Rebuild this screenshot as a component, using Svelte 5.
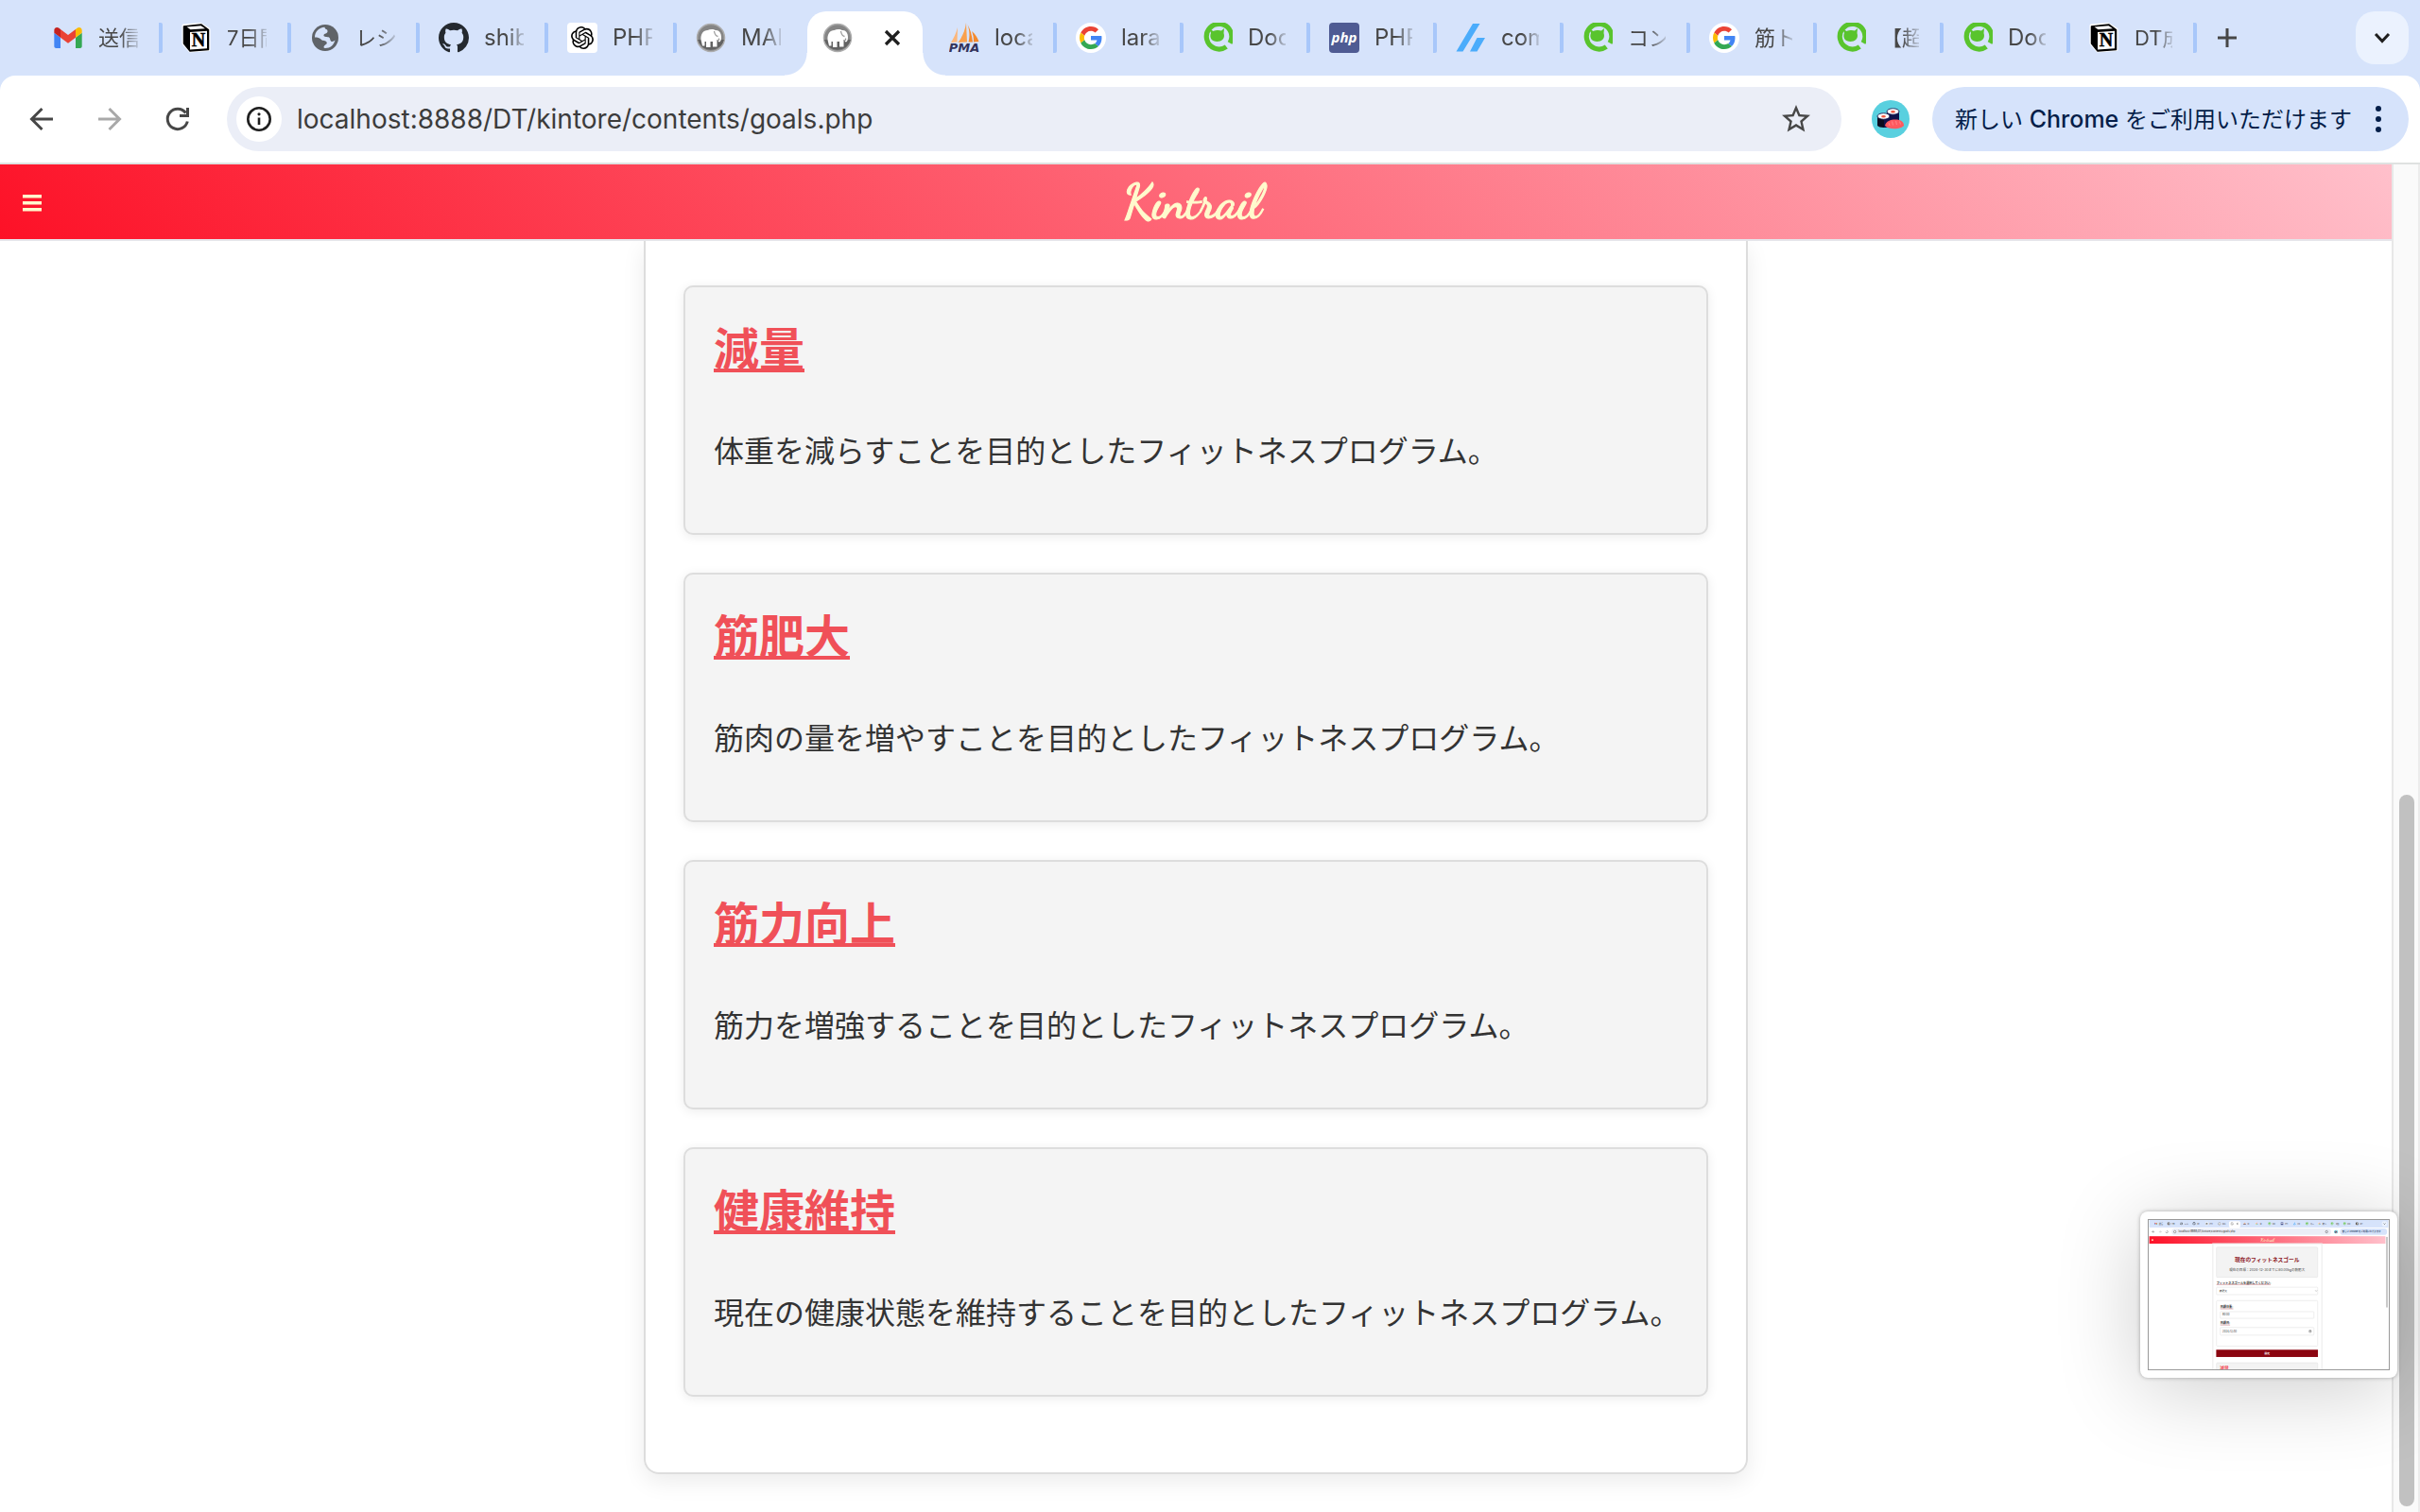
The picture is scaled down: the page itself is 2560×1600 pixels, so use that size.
<script>
  const leftTabs = [
    { icon: 'gmail', title: '送信済み', ja: true },
    { icon: 'notion', title: '7日間の', ja: true },
    { icon: 'globe', title: 'レシピ', ja: true },
    { icon: 'github', title: 'shibata' },
    { icon: 'openai', title: 'PHP' },
    { icon: 'mamp', title: 'MAMP' }
  ];
  const rightTabs = [
    { icon: 'pma', title: 'localhost' },
    { icon: 'google', title: 'laravel' },
    { icon: 'qiita', title: 'Docker' },
    { icon: 'php', title: 'PHP' },
    { icon: 'slant', title: 'common' },
    { icon: 'qiita', title: 'コンテナ', ja: true },
    { icon: 'google', title: '筋トレ', ja: true },
    { icon: 'qiita', title: '【超入門', ja: true },
    { icon: 'qiita', title: 'Docker' },
    { icon: 'notion', title: 'DT成果', ja: true }
  ];
  const goals = [
    { name: '減量', text: '体重を減らすことを目的としたフィットネスプログラム。' },
    { name: '筋肥大', text: '筋肉の量を増やすことを目的としたフィットネスプログラム。' },
    { name: '筋力向上', text: '筋力を増強することを目的としたフィットネスプログラム。' },
    { name: '健康維持', text: '現在の健康状態を維持することを目的としたフィットネスプログラム。' }
  ];
  let url = $state('localhost:8888/DT/kintore/contents/goals.php');
</script>

{#snippet favicon(kind, x = 0, y = 0)}
  {#if kind === 'gmail'}
    <svg {x} {y} width="32" height="32" viewBox="48 27 96 96" aria-hidden="true">
      <path fill="#4285f4" d="M58 108h14V74L52 59v43c0 3.32 2.69 6 6 6" />
      <path fill="#34a853" d="M120 108h14c3.32 0 6-2.69 6-6V59l-20 15" />
      <path fill="#fbbc04" d="M120 48v26l20-15v-8c0-7.42-8.47-11.65-14.4-7.2" />
      <path fill="#ea4335" d="M72 74V48l24 18 24-18v26L96 92" />
      <path fill="#c5221f" d="M52 51v8l20 15V48l-5.6-4.2c-5.94-4.45-14.4-.22-14.4 7.2" />
    </svg>
  {:else if kind === 'notion'}
    <svg {x} {y} width="32" height="32" viewBox="0 0 32 32" aria-hidden="true">
      <path d="M2 3 L20 1.500 L29 7 V28.500 L9 30 L2 22 Z" fill="#fff" stroke="#fff" stroke-width="3" stroke-linejoin="round" />
      <path d="M2.500 4 L21 2 L28.500 7.500 V28.500 L9 30 L2.500 22 Z" fill="#000" stroke="#000" stroke-width="1.500" stroke-linejoin="round" />
      <path d="M5.500 4.500 L20.500 3.200 L25 6.300 L9.500 7.300 Z" fill="#fff" />
      <path d="M9 10 L27 8.800 V27.200 L9 28.500 Z" fill="#fff" />
      <text x="18" y="25" text-anchor="middle" font-family="Liberation Serif, serif" font-size="20" font-weight="700" fill="#000" stroke="#000" stroke-width="0.500">N</text>
    </svg>
  {:else if kind === 'globe'}
    <svg {x} {y} width="32" height="32" viewBox="0 0 32 32" aria-hidden="true">
      <circle cx="16" cy="16" r="14" fill="#5f6368" />
      <path d="M5 15.500 C5 9.500 9.500 5 15.500 4.800 C15.500 7.500 19 6.500 18.500 9.500 C18 12 15 11 14.500 13 C14 15 17 15 19.500 15.300 C22 16 20.500 19.500 23 20 C24.500 20.200 25.500 19 26.500 18.500 C25 23.500 21.500 27 16 27 C14.500 26.800 14 26 15 24.500 C16.500 23 18.500 22.500 17.500 20.500 C16.500 18.500 13.500 19.500 12 18 C10 16 8 15.500 5 15.500 Z" fill="#d6e3fb" />
    </svg>
  {:else if kind === 'github'}
    <svg {x} {y} width="32" height="32" viewBox="0 0 16 16" aria-hidden="true">
      <path fill="#24292f" d="M8 0C3.58 0 0 3.58 0 8c0 3.54 2.29 6.53 5.47 7.59.4.07.55-.17.55-.38 0-.19-.01-.82-.01-1.49-2.01.37-2.53-.49-2.69-.94-.09-.23-.48-.94-.82-1.13-.28-.15-.68-.52-.01-.53.63-.01 1.08.58 1.23.82.72 1.21 1.87.87 2.33.66.07-.52.28-.87.51-1.07-1.78-.2-3.64-.89-3.64-3.95 0-.87.31-1.59.82-2.15-.08-.2-.36-1.02.08-2.12 0 0 .67-.21 2.2.82.64-.18 1.32-.27 2-.27s1.36.09 2 .27c1.53-1.04 2.2-.82 2.2-.82.44 1.1.16 1.92.08 2.12.51.56.82 1.27.82 2.15 0 3.07-1.87 3.75-3.65 3.95.29.25.54.73.54 1.48 0 1.07-.01 1.93-.01 2.2 0 .21.15.46.55.38A8.01 8.01 0 0016 8c0-4.42-3.58-8-8-8z" />
    </svg>
  {:else if kind === 'openai'}
    <svg {x} {y} width="32" height="32" viewBox="0 0 32 32" aria-hidden="true">
      <rect width="32" height="32" rx="4" fill="#fff" />
      <svg x="4" y="4" width="24" height="24" viewBox="0 0 24 24">
        <path d="M22.2819 9.8211a5.9847 5.9847 0 0 0-.5157-4.9108 6.0462 6.0462 0 0 0-6.5098-2.9A6.0651 6.0651 0 0 0 4.9807 4.1818a5.9847 5.9847 0 0 0-3.9977 2.9 6.0462 6.0462 0 0 0 .7427 7.0966 5.98 5.98 0 0 0 .511 4.9107 6.051 6.051 0 0 0 6.5146 2.9001A5.9847 5.9847 0 0 0 13.2599 24a6.0557 6.0557 0 0 0 5.7718-4.2058 5.9894 5.9894 0 0 0 3.9977-2.9001 6.0557 6.0557 0 0 0-.7475-7.0729zm-9.022 12.6081a4.4755 4.4755 0 0 1-2.8764-1.0408l.1419-.0804 4.7783-2.7582a.7948.7948 0 0 0 .3927-.6813v-6.7369l2.02 1.1686a.071.071 0 0 1 .038.052v5.5826a4.504 4.504 0 0 1-4.4945 4.4944zm-9.6607-4.1254a4.4708 4.4708 0 0 1-.5346-3.0137l.142.0852 4.783 2.7582a.7712.7712 0 0 0 .7806 0l5.8428-3.3685v2.3324a.0804.0804 0 0 1-.0332.0615L9.74 19.9502a4.4992 4.4992 0 0 1-6.1408-1.6464zM2.3408 7.8956a4.485 4.485 0 0 1 2.3655-1.9728V11.6a.7664.7664 0 0 0 .3879.6765l5.8144 3.3543-2.0201 1.1685a.0757.0757 0 0 1-.071 0l-4.8303-2.7865A4.504 4.504 0 0 1 2.3408 7.872zm16.5963 3.8558L13.1038 8.364 15.1192 7.2a.0757.0757 0 0 1 .071 0l4.8303 2.7913a4.4944 4.4944 0 0 1-.6765 8.1042v-5.6772a.79.79 0 0 0-.407-.667zm2.0107-3.0231l-.142-.0852-4.7735-2.7818a.7759.7759 0 0 0-.7854 0L9.409 9.2297V6.8974a.0662.0662 0 0 1 .0284-.0615l4.8303-2.7866a4.4992 4.4992 0 0 1 6.6802 4.66zM8.3065 12.863l-2.02-1.1638a.0804.0804 0 0 1-.038-.0567V6.0742a4.4992 4.4992 0 0 1 7.3757-3.4537l-.142.0805L8.704 5.459a.7948.7948 0 0 0-.3927.6813zm1.0976-2.3654l2.602-1.4998 2.6069 1.4998v2.9994l-2.5974 1.4997-2.6067-1.4997Z" />
      </svg>
    </svg>
  {:else if kind === 'mamp'}
    <svg {x} {y} width="32" height="32" viewBox="0 0 32 32" aria-hidden="true">
      <circle cx="16" cy="16" r="14.500" fill="#858585" stroke="#adadad" stroke-width="1.500" />
      <path d="M2 18 A14.500 14.500 0 0 0 30 18 Z" fill="#626262" />
      <path d="M5.500 18 C5 12 8 8 12.500 8 C15 6.500 19 6.500 21 8 C24.500 7.500 27 11 27 15 C27 18 26.500 20 25 20.500 C24 20.500 23.500 19 23.500 18 L22.500 18 V25.500 H18 V20 H15.500 V26 H11 V20 L9.500 20 V24.500 H7 Z" fill="#fff" />
      <path d="M19.500 9 C20 12 21 14 23.500 14.500 M24.500 16.500 V19" stroke="#9a9a9a" stroke-width="1.300" fill="none" />
    </svg>
  {:else if kind === 'pma'}
    <svg {x} {y} width="32" height="32" viewBox="0 0 32 32" aria-hidden="true">
      <path d="M9 5 C7.500 11 5 16 2 21 L8.500 20.500 Z" fill="#fbb67a" />
      <path d="M18 0 C17 8 14 15 9.500 21 L19 20.500 Z" fill="#f9a04d" />
      <path d="M19.500 2 C22 9 22 15 20.500 20.500 L25 20.500 C24 13 22.500 7 19.500 2 Z" fill="#f58a2c" />
      <path d="M24 9 C28 12 30 16 31.500 20 L26 20.500 C26 16 25.500 13 24 9 Z" fill="#f58a2c" />
      <text x="16" y="31" text-anchor="middle" font-family="DejaVu Sans, sans-serif" font-size="13" font-weight="700" font-style="italic" fill="#33335c">PMA</text>
    </svg>
  {:else if kind === 'google'}
    <svg {x} {y} width="32" height="32" viewBox="-8 -8 64 64" aria-hidden="true">
      <circle cx="24" cy="24" r="32" fill="#fff" />
      <path fill="#ea4335" d="M24 9.5c3.54 0 6.71 1.22 9.21 3.6l6.85-6.85C35.9 2.38 30.47 0 24 0 14.62 0 6.51 5.38 2.56 13.22l7.98 6.19C12.43 13.72 17.74 9.5 24 9.5z" />
      <path fill="#4285f4" d="M46.98 24.55c0-1.57-.15-3.09-.38-4.55H24v9.02h12.94c-.58 2.96-2.26 5.48-4.78 7.18l7.73 6c4.51-4.18 7.09-10.36 7.09-17.65z" />
      <path fill="#fbbc05" d="M10.53 28.59c-.48-1.45-.76-2.99-.76-4.59s.27-3.14.76-4.59l-7.98-6.19C.92 16.46 0 20.12 0 24c0 3.88.92 7.54 2.56 10.78l7.97-6.19z" />
      <path fill="#34a853" d="M24 48c6.48 0 11.93-2.13 15.89-5.81l-7.73-6c-2.15 1.45-4.92 2.3-8.16 2.3-6.26 0-11.57-4.22-13.47-9.91l-7.98 6.19C6.51 42.62 14.62 48 24 48z" />
    </svg>
  {:else if kind === 'qiita'}
    <svg {x} {y} width="32" height="32" viewBox="0 0 32 32" aria-hidden="true">
      <path d="M29 21.500 A13.300 13.300 0 1 0 25.300 25.500" fill="none" stroke="#59c42d" stroke-width="5.200" />
      <path d="M7.500 6.500 L11.500 9 C14 7.800 18 7.600 20 8.600 L23 6 L22.500 11 C24.500 17 20 20 15.500 20 C10 20 7 16 9 11 Z" fill="#59c42d" />
    </svg>
  {:else if kind === 'php'}
    <svg {x} {y} width="32" height="32" viewBox="0 0 32 32" aria-hidden="true">
      <rect width="32" height="32" rx="4" fill="#4f5b93" />
      <text x="16" y="21" text-anchor="middle" font-family="Open Sans, sans-serif" font-size="15" font-weight="700" font-style="italic" fill="#fff">php</text>
    </svg>
  {:else}
    <svg {x} {y} width="32" height="32" viewBox="0 0 32 32" aria-hidden="true">
      <path d="M18 1 H25.500 L7.500 30.500 H0.500 Z M22.500 16 H31 L22.500 30.500 H15 Z" fill="#4bacfb" />
    </svg>
  {/if}
{/snippet}

{#snippet avatar(x = 0, y = 0)}
  <svg {x} {y} width="40" height="40" viewBox="0 0 40 40" aria-hidden="true">
    <circle cx="20" cy="20" r="20" fill="#59d0df" />
    <path d="M16 12 V22 H29 V12 Z" fill="#10124a" />
    <ellipse cx="22.500" cy="12" rx="6.500" ry="3.200" fill="#fff" stroke="#10124a" stroke-width="0.800" />
    <ellipse cx="22.500" cy="12.200" rx="2.400" ry="1.200" fill="#f0563f" />
    <path d="M6 17 V27 C8 29.500 17 29.500 19 27 V17 Z" fill="#0b0b1e" />
    <path d="M13 18 V29 C16 29 18 28 19 27 V17 Z" fill="#10124a" />
    <ellipse cx="12.500" cy="17" rx="6.500" ry="3.200" fill="#fff" stroke="#10124a" stroke-width="0.800" />
    <ellipse cx="12.500" cy="17.200" rx="2.400" ry="1.200" fill="#f0563f" />
    <path d="M14 27 C15 22 20 20.500 25 20.500 C31 20.500 34 23 34 27 C31 31 18 31.500 14 27 Z" fill="#ff5a60" />
    <path d="M18 24 l1 3 M21.500 22.500 l1 4 M25.500 22 l1 4 M29.500 22.500 l1 3" stroke="#ff8f92" stroke-width="0.800" fill="none" />
  </svg>
{/snippet}

{#snippet tab(t)}
  <button class="tab" type="button" role="tab" aria-selected="false">
    {@render favicon(t.icon)}
    <span class="tab-title" class:ja={t.ja}>{t.title}</span>
  </button>
{/snippet}

<div class="window">
  <div class="tabstrip" role="tablist" aria-label="タブ">
    <div class="tabs before">
      {#each leftTabs as t}{@render tab(t)}{/each}
    </div>
    <div class="active-tab" role="tab" aria-selected="true" tabindex="0">
      {@render favicon('mamp')}
      <button class="plain" type="button" aria-label="タブを閉じる">
        <svg width="32" height="32" viewBox="0 0 32 32"><path d="M9 9 L23 23 M23 9 L9 23" stroke="#1f1f1f" stroke-width="3.200" /></svg>
      </button>
    </div>
    <div class="tabs after">
      {#each rightTabs as t}{@render tab(t)}{/each}
    </div>
    <button class="plain new-tab" type="button" aria-label="新しいタブ">
      <svg width="32" height="32" viewBox="0 0 32 32"><path d="M16 6 V26 M6 16 H26" stroke="#474747" stroke-width="3" /></svg>
    </button>
    <button class="tab-search" type="button" aria-label="タブを検索">
      <svg width="24" height="24" viewBox="0 0 24 24"><path d="M5 8 L12 15.500 L19 8" fill="none" stroke="#1f1f1f" stroke-width="3" /></svg>
    </button>
  </div>

  <div class="toolbar-wrap">
    <div class="toolbar">
      <div class="nav">
        <button class="plain" type="button" aria-label="戻る">
          <svg width="32" height="32" viewBox="0 0 32 32"><path d="M28 16 H6 M16.500 5 L5.500 16 L16.500 27" fill="none" stroke="#474747" stroke-width="3" /></svg>
        </button>
        <button class="plain" type="button" aria-label="進む" disabled>
          <svg width="32" height="32" viewBox="0 0 32 32"><path d="M4 16 H26 M15.500 5 L26.500 16 L15.500 27" fill="none" stroke="#a9a9a9" stroke-width="3" /></svg>
        </button>
        <button class="plain" type="button" aria-label="再読み込み">
          <svg width="32" height="32" viewBox="0 0 32 32"><path d="M26.300 18.500 A10.700 10.700 0 1 1 24.500 9.500 M26.500 4 V12.500 H18" fill="none" stroke="#474747" stroke-width="3" /></svg>
        </button>
      </div>
      <div class="omnibox">
        <button class="site-info" type="button" aria-label="サイト情報を表示">
          <svg width="28" height="28" viewBox="0 0 28 28"><circle cx="14" cy="14" r="11.700" fill="none" stroke="#1f1f1f" stroke-width="2.600" /><path d="M14 12.500 V20" stroke="#1f1f1f" stroke-width="2.600" /><circle cx="14" cy="8.800" r="1.600" fill="#1f1f1f" /></svg>
        </button>
        <input class="url" type="text" aria-label="アドレス" bind:value={url} />
        <button class="plain" type="button" aria-label="ブックマークに追加">
          <svg width="36" height="36" viewBox="0 0 24 24"><path fill="#474747" d="M22 9.240l-7.190-.62L12 2 9.190 8.630 2 9.240l5.460 4.730L5.820 21 12 17.270 18.180 21l-1.630-7.030L22 9.240zM12 15.400l-3.760 2.270 1-4.280-3.320-2.880 4.380-.38L12 6.100l1.710 4.040 4.380.38-3.320 2.880 1 4.280L12 15.400z" /></svg>
        </button>
      </div>
      <button class="plain" type="button" aria-label="プロフィール">{@render avatar()}</button>
      <button class="promo" type="button">
        <span>新しい <b>Chrome</b> をご利用いただけます</span>
        <svg width="16" height="32" viewBox="0 0 16 32" aria-hidden="true"><g fill="#041e49"><circle cx="8" cy="5" r="3" /><circle cx="8" cy="16" r="3" /><circle cx="8" cy="27" r="3" /></g></svg>
      </button>
    </div>
  </div>

  <div class="viewport">
    <div class="page">
      <header>
        <button class="plain menu" type="button" aria-label="メニュー">
          <svg width="20" height="20" viewBox="0 0 20 20"><path d="M0 2 H20 V5.500 H0 Z M0 9 H20 V12.500 H0 Z M0 16 H20 V19.500 H0 Z" fill="#fffacd" /></svg>
        </button>
        <a class="brand" href="#top">Kintrail</a>
      </header>
      <main>
        <div class="panel">
          {#each goals as goal}
            <article class="goal">
              <h2><a href="#goal">{goal.name}</a></h2>
              <p>{goal.text}</p>
            </article>
          {/each}
        </div>
      </main>
    </div>
    <div class="scrollbar"><div class="thumb"></div></div>
  </div>

  <div class="preview">
    <svg viewBox="0 0 2560 1600" role="img" aria-label="スクリーンショットのプレビュー">
      <defs>
        <linearGradient id="bar"><stop offset="0" stop-color="#fd1128" /><stop offset="1" stop-color="#ffc0cb" /></linearGradient>
      </defs>
      <rect width="2560" height="1600" fill="#fff" />
      <rect width="2560" height="80" fill="#d6e3fb" />
      <rect x="854" y="12" width="122" height="68" rx="16" fill="#fff" />
      {#each leftTabs as t, i}
        {@render favicon(t.icon, 56 + i * 136, 24)}
        <text x={104 + i * 136} y="49" font-size="22" fill="#474747">{t.title.slice(0, 2)}</text>
      {/each}
      {@render favicon('mamp', 870, 24)}
      <path d="M936 32 L952 48 M952 32 L936 48" stroke="#222" stroke-width="4" />
      {#each rightTabs as t, i}
        {@render favicon(t.icon, 1004 + i * 134, 24)}
        <text x={1052 + i * 134} y="49" font-size="22" fill="#474747">{t.title.slice(0, 2)}</text>
      {/each}
      <rect x="2492" y="12" width="56" height="56" rx="20" fill="#ebf2fe" />
      <path d="M2510 36 L2520 46 L2530 36" stroke="#222" stroke-width="5" fill="none" />
      <path d="M56 126 H32 M44 114 L32 126 L44 138 M176 126 a12 12 0 1 0 12 -12" stroke="#474747" stroke-width="4" fill="none" />
      <path d="M104 126 H128 M116 114 L128 126 L116 138" stroke="#aaa" stroke-width="4" fill="none" />
      <rect x="240" y="92" width="1708" height="68" rx="34" fill="#ebeef7" />
      <circle cx="274" cy="126" r="12" fill="#fff" stroke="#222" stroke-width="4" />
      <text x="314" y="136" font-size="28" fill="#333">{url}</text>
      <circle cx="1900" cy="126" r="12" fill="none" stroke="#474747" stroke-width="5" />
      {@render avatar(1980, 106)}
      <rect x="2044" y="92" width="504" height="68" rx="34" fill="#d6e3fb" />
      <text x="2068" y="135" font-size="24" font-weight="500" fill="#041e49">新しい Chrome をご利用いただけます</text>
      <rect y="174" width="2530" height="80" fill="url(#bar)" />
      <path d="M24 206 h20 v4 h-20 z M24 213 h20 v4 h-20 z M24 220 h20 v4 h-20 z" fill="#fffacd" />
      <text x="1265" y="230" text-anchor="middle" font-family="Dancing Script, cursive" font-weight="700" font-size="50" fill="#fffacd">Kintrail</text>
      <rect x="2538" y="180" width="16" height="760" rx="8" fill="#bbb" />
      <rect x="681" y="254" width="1168" height="1360" fill="#fff" stroke="#eee" stroke-width="12" />
      <g stroke="#e2e2e2" stroke-width="6" fill="#fff">
        <rect x="720" y="292" width="1084" height="322" rx="10" fill="#f3f3f3" />
        <rect x="720" y="720" width="1084" height="80" rx="8" />
        <rect x="720" y="864" width="1084" height="488" rx="10" />
        <rect x="760" y="982" width="1004" height="72" rx="8" />
        <rect x="760" y="1152" width="1004" height="82" rx="8" />
        <rect x="720" y="1530" width="1084" height="100" rx="10" fill="#f3f3f3" />
      </g>
      <text x="1262" y="450" text-anchor="middle" font-size="58" font-weight="700" fill="#8b1220">現在のフィットネスゴール</text>
      <text x="1262" y="550" text-anchor="middle" font-size="36" fill="#444">現在の目標：2024-12-30までに80.00kgの筋肥大</text>
      <g font-weight="700" font-size="32" fill="#333">
        <text x="720" y="685">フィットネスゴールを選択してください:</text>
        <text x="760" y="945">目標体重:</text>
        <text x="760" y="1118">目標日:</text>
      </g>
      <path d="M720 692 H1300 M760 952 H900 M760 1125 H866" stroke="#a8323e" stroke-width="4" />
      <g font-size="28" fill="#333">
        <text x="750" y="770">筋肥大</text>
        <text x="784" y="1027">80.00</text>
        <text x="784" y="1203">2024/12/30</text>
      </g>
      <path d="M1780 755 l8 8 l8 -8 M1714 1182 h20 v22 h-20 z M1714 1188 h20" stroke="#444" stroke-width="4" fill="none" />
      <rect x="717" y="1390" width="1090" height="78" fill="#8b0510" />
      <text x="1262" y="1439" text-anchor="middle" font-size="28" font-weight="700" fill="#fff">設定</text>
      <text x="755" y="1598" font-size="48" font-weight="700" fill="#f2505b">減量</text>
    </svg>
  </div>
</div>

<style>
  :global(body) {
    margin: 0;
  }
  .window {
    position: relative;
    display: flex;
    flex-direction: column;
    min-height: 100vh;
    overflow: hidden;
    background: #fff;
    font-family: Inter, 'Noto Sans CJK JP', sans-serif;
    color: #333;
  }
  svg {
    display: block;
    flex: none;
  }
  button {
    font: inherit;
    color: inherit;
    border: 0;
    cursor: pointer;
  }
  .plain {
    display: flex;
    padding: 0;
    background: none;
  }

  .tabstrip {
    display: flex;
    align-items: center;
    height: 80px;
    padding: 0 12px 0 32px;
    background: #d6e3fb;
  }
  .tabs {
    display: flex;
  }
  .tab {
    display: flex;
    align-items: center;
    gap: 16px;
    box-sizing: border-box;
    padding: 0 22px 0 20px;
    border-right: 4px solid #a8c7fa;
    border-radius: 2px;
    background: none;
    font-size: 24px;
    line-height: 32px;
    color: #474747;
  }
  .before .tab {
    width: 136px;
  }
  .before .tab:first-child {
    padding-left: 24px;
    width: 140px;
  }
  .before .tab:last-child {
    border-right-color: transparent;
  }
  .after .tab {
    width: 134px;
  }
  .tab-title {
    flex: 1;
    height: 32px;
    overflow: hidden;
    white-space: nowrap;
    text-align: left;
    mask-image: linear-gradient(90deg, #000 55%, rgba(0, 0, 0, 0.2));
  }
  .tab-title.ja {
    font-size: 22px;
  }
  .active-tab {
    position: relative;
    display: flex;
    align-items: center;
    align-self: flex-end;
    justify-content: space-between;
    box-sizing: border-box;
    width: 122px;
    height: 68px;
    margin-left: 2px;
    padding: 0 16px 12px;
    border-radius: 20px 20px 0 0;
    background: #fff;
  }
  .active-tab::before,
  .active-tab::after {
    content: '';
    position: absolute;
    bottom: 0;
    width: 24px;
    height: 24px;
  }
  .active-tab::before {
    right: 100%;
    background: radial-gradient(circle at 0 0, transparent 23px, #fff 24px);
  }
  .active-tab::after {
    left: 100%;
    background: radial-gradient(circle at 100% 0, transparent 23px, #fff 24px);
  }
  .after {
    margin-left: 8px;
  }
  .new-tab {
    margin-left: 16px;
  }
  .tab-search {
    display: grid;
    place-items: center;
    width: 56px;
    height: 56px;
    margin-left: auto;
    padding: 0;
    border-radius: 20px;
    background: #ebf2fe;
  }

  .toolbar-wrap {
    background: #d6e3fb;
    border-bottom: 2px solid #dfe2e1;
  }
  .toolbar {
    display: flex;
    align-items: center;
    padding: 12px;
    border-radius: 16px 16px 0 0;
    background: #fff;
  }
  .nav {
    display: flex;
    gap: 40px;
    padding: 0 36px 0 16px;
  }
  .omnibox {
    display: flex;
    flex: 1;
    align-items: center;
    height: 68px;
    margin-right: 32px;
    padding: 0 30px 0 10px;
    box-sizing: border-box;
    border-radius: 34px;
    background: #ebeef7;
  }
  .site-info {
    display: grid;
    place-items: center;
    width: 48px;
    height: 48px;
    padding: 0;
    border-radius: 50%;
    background: #fff;
  }
  .url {
    flex: 1;
    min-width: 0;
    padding: 0 16px;
    border: 0;
    outline: 0;
    background: none;
    font: inherit;
    font-size: 28px;
    line-height: 40px;
    color: #3c3c3c;
  }
  .promo {
    display: flex;
    align-items: center;
    justify-content: space-between;
    box-sizing: border-box;
    min-width: 504px;
    height: 68px;
    margin-left: 24px;
    padding: 0 24px;
    border-radius: 34px;
    background: #d6e3fb;
    color: #041e49;
    font-size: 24px;
    line-height: 32px;
    white-space: nowrap;
  }
  .promo b {
    font-size: 25px;
    font-weight: 500;
  }

  .viewport {
    display: flex;
    flex: 1;
  }
  .page {
    flex: 1;
    overflow: hidden;
  }
  header {
    position: relative;
    z-index: 1;
    display: grid;
    grid-template-columns: 1fr auto 1fr;
    align-items: center;
    height: 79px;
    padding: 0 24px;
    border-bottom: 2px solid #e5e5ea;
    background: linear-gradient(45deg, #fd1127, #ffc0cb);
  }
  .menu {
    justify-self: start;
  }
  .brand {
    padding-right: 8px;
    font-family: 'Dancing Script', cursive;
    font-size: 50px;
    font-weight: 700;
    line-height: 64px;
    color: #fffacd;
    -webkit-text-stroke: 1px #fffacd;
    text-decoration: none;
  }
  main {
    padding: 0 24px 40px;
  }
  .panel {
    box-sizing: border-box;
    max-width: 1168px;
    margin: 0 auto;
    padding: 47px 40px 40px;
    border: 2px solid #ddd;
    border-top: 0;
    border-radius: 0 0 16px 16px;
    box-shadow: 0 8px 24px rgba(0, 0, 0, 0.08);
  }
  .goal {
    margin-bottom: 40px;
    padding: 30px 24px 30px 30px;
    border: 2px solid #ddd;
    border-radius: 10px;
    background: #f4f4f4;
    box-shadow: 0 2px 12px rgba(0, 0, 0, 0.08);
  }
  h2 {
    margin: 0 0 46px;
    font-size: 48px;
    line-height: 72px;
  }
  h2 a {
    color: #f05058;
    text-decoration-thickness: 4px;
    text-underline-offset: 3px;
    text-decoration-skip-ink: none;
  }
  .goal p {
    margin: 0 0 30px;
    font-size: 32px;
    line-height: 52px;
  }

  .scrollbar {
    display: grid;
    grid-template-rows: 47fr 53fr;
    box-sizing: border-box;
    width: 30px;
    padding: 0 4px 6px 6px;
    border-left: 2px solid #e8e8e8;
    border-right: 2px solid #ececec;
    background: #fafafa;
  }
  .thumb {
    grid-row: 2;
    border-radius: 8px;
    background: #c1c1c1;
  }

  .preview {
    position: absolute;
    right: 24px;
    bottom: 142px;
    z-index: 2;
    padding: 8px;
    border-radius: 8px;
    background: #fff;
    box-shadow:
      0 0 4px rgba(0, 0, 0, 0.3),
      0 12px 90px rgba(0, 0, 0, 0.2);
  }
  .preview > svg {
    box-sizing: border-box;
    width: 256px;
    height: 160px;
    border: 1px solid #999;
  }
</style>
